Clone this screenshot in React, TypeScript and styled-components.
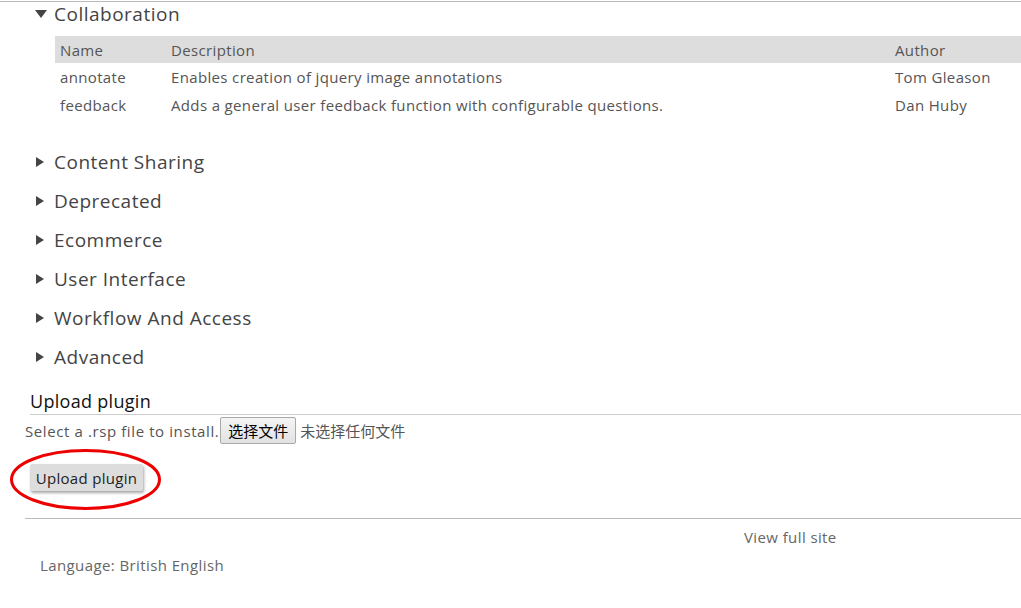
import React from 'react';
import styled, { createGlobalStyle } from 'styled-components';

const GlobalStyle = createGlobalStyle`
	body {
		margin: 0;
		background: #fff;
		font-family: 'Open Sans', 'Noto Sans CJK SC', sans-serif;
		color: #555;
	}
`;

const Page = styled.div`
	width: 1021px;
	border-top: 1px solid #bbb;
	margin-top: 1px;
`;

const Sections = styled.div`
	padding-left: 35px;
`;

const SectionHead = styled.div<{ $open?: boolean }>`
	display: flex;
	align-items: center;
	height: ${(p) => (p.$open ? '24px' : '39px')};
	font-size: 19px;
	color: #444;
	letter-spacing: 0.5px;
`;

const Arrow = styled.span`
	width: 19px;
	display: flex;
	align-items: center;
	svg {
		width: 12px;
		height: 12px;
		fill: #444;
	}
`;

const Table = styled.table`
	margin: 10px 0 23px 20px;
	width: calc(100% - 20px);
	border-collapse: collapse;
	font-size: 15px;
	color: #555;
	letter-spacing: 0.35px;
	th {
		background: #ddd;
		font-weight: normal;
		text-align: left;
		height: 27px;
		padding: 0 5px;
	}
	td {
		height: 28px;
		padding: 0 5px;
	}
`;

const Col = styled.col<{ $w?: number }>`
	width: ${(p) => (p.$w ? `${p.$w}px` : 'auto')};
`;

const Upload = styled.div`
	padding-left: 25px;
`;

const UploadTitle = styled.h3`
	margin: 14px 0 0 5px;
	font-size: 18px;
	font-weight: 500;
	color: #111;
	letter-spacing: 0.3px;
	line-height: 23px;
	padding-bottom: 1px;
	border-bottom: 1px solid #ccc;
`;

const FileRow = styled.div`
	display: flex;
	align-items: center;
	margin-top: 2px;
	font-size: 15px;
	color: #555;
	letter-spacing: 0.6px;
`;

const FileButton = styled.button`
	height: 27px;
	width: 76px;
	margin: 0 4px 0 1px;
	padding: 0;
	font-family: 'Noto Sans CJK SC', sans-serif;
	font-size: 15px;
	color: #000;
	background: linear-gradient(#f4f4f4, #e2e2e2);
	border: 1px solid #a9a9a9;
	border-radius: 2px;
`;

const NoFile = styled.span`
	font-family: 'Noto Sans CJK SC', sans-serif;
	letter-spacing: 0;
	color: #555;
`;

const ButtonWrap = styled.div`
	position: relative;
	display: inline-block;
	margin: 20px 0 0 5px;
`;

const UploadButton = styled.button`
	height: 27px;
	width: 113px;
	padding: 0;
	font-family: 'Open Sans', sans-serif;
	font-size: 15px;
	color: #222;
	letter-spacing: 0.3px;
	background: #ddd;
	border: none;
	border-radius: 2px;
	box-shadow: 1px 2px 3px rgba(0, 0, 0, 0.35);
`;

const Ellipse = styled.svg`
	position: absolute;
	left: -20px;
	top: -15px;
	width: 151px;
	height: 61px;
	overflow: visible;
	pointer-events: none;
`;

const Footer = styled.div`
	margin: 27px 0 0 25px;
	border-top: 1px solid #bbb;
	font-size: 15px;
	color: #666;
	letter-spacing: 0.4px;
`;

const FullSite = styled.div`
	padding-left: 719px;
	margin-top: 8px;
	line-height: 20px;
`;

const Language = styled.div`
	padding-left: 15px;
	margin-top: 8px;
	line-height: 20px;
`;

const ArrowIcon = ({ open }: { open?: boolean }) => (
	<Arrow>
		<svg viewBox='0 0 12 12'>
			{open ? <polygon points='0,2 12,2 6,10' /> : <polygon points='1,1 9,6 1,11' />}
		</svg>
	</Arrow>
);

const closed = [
	'Content Sharing',
	'Deprecated',
	'Ecommerce',
	'User Interface',
	'Workflow And Access',
	'Advanced',
];

const plugins = [
	{ name: 'annotate', desc: 'Enables creation of jquery image annotations', author: 'Tom Gleason' },
	{ name: 'feedback', desc: 'Adds a general user feedback function with configurable questions.', author: 'Dan Huby' },
];

const App = () => (
	<Page>
		<GlobalStyle />
		<Sections>
			<SectionHead $open>
				<ArrowIcon open />
				Collaboration
			</SectionHead>
			<Table>
				<colgroup>
					<Col $w={111} />
					<Col />
					<Col $w={131} />
				</colgroup>
				<thead>
					<tr>
						<th>Name</th>
						<th>Description</th>
						<th>Author</th>
					</tr>
				</thead>
				<tbody>
					{plugins.map((p) => (
						<tr key={p.name}>
							<td>{p.name}</td>
							<td>{p.desc}</td>
							<td>{p.author}</td>
						</tr>
					))}
				</tbody>
			</Table>
			{closed.map((c) => (
				<SectionHead key={c}>
					<ArrowIcon />
					{c}
				</SectionHead>
			))}
		</Sections>
		<Upload>
			<UploadTitle>Upload plugin</UploadTitle>
			<FileRow>
				Select a .rsp file to install.
				<FileButton>选择文件</FileButton>
				<NoFile>未选择任何文件</NoFile>
			</FileRow>
			<ButtonWrap>
				<UploadButton>Upload plugin</UploadButton>
				<Ellipse viewBox='0 0 151 61'>
					<ellipse cx='75.5' cy='30.5' rx='74' ry='29' fill='none' stroke='#e00' strokeWidth='3' />
				</Ellipse>
			</ButtonWrap>
		</Upload>
		<Footer>
			<FullSite>View full site</FullSite>
			<Language>Language: British English</Language>
		</Footer>
	</Page>
);

export default App;
